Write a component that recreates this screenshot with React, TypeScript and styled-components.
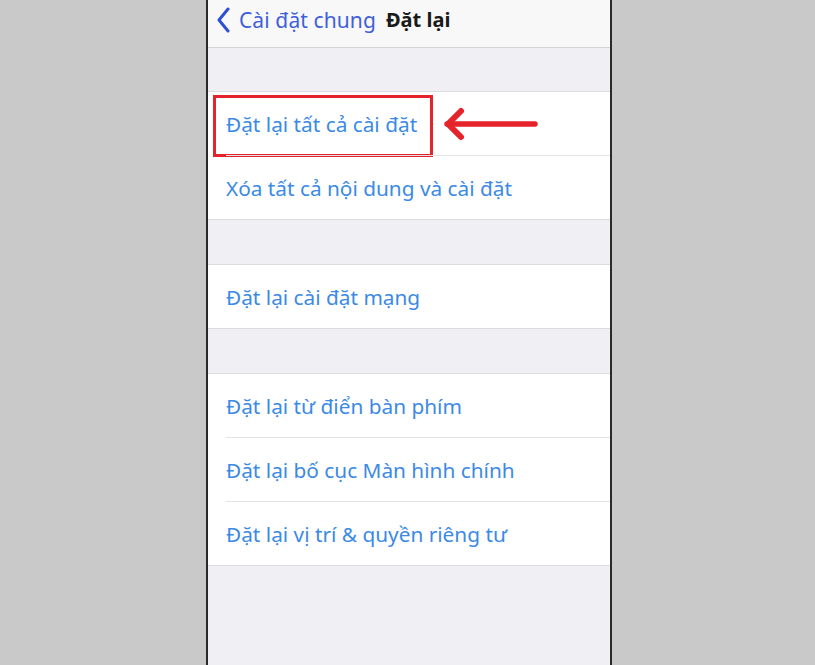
import styled, { createGlobalStyle } from 'styled-components';

const GlobalStyle = createGlobalStyle`
  html, body {
    margin: 0;
    padding: 0;
    background: #c9c9c9;
  }
  body {
    font-family: "Noto Sans", "Liberation Sans", sans-serif;
  }
`;

const Page = styled.div`
  width: 815px;
  height: 665px;
  display: flex;
  padding-left: 206px;
  box-sizing: border-box;
  background: #c9c9c9;
  overflow: hidden;
`;

const Phone = styled.div`
  width: 402px;
  height: 665px;
  border-left: 2px solid #2a2a2a;
  border-right: 2px solid #2a2a2a;
  background: #efeff4;
  display: flex;
  flex-direction: column;
`;

const NavBar = styled.div`
  height: 48px;
  box-sizing: border-box;
  flex-shrink: 0;
  background: #f8f8f8;
  border-bottom: 1px solid #d4d4d8;
  display: flex;
  align-items: center;
  padding: 0 0 8px 8px;
  gap: 10px;
`;

const BackLink = styled.div`
  display: flex;
  align-items: center;
  gap: 9px;
  color: #3f5fdc;
  font-size: 21px;
  letter-spacing: 0.1px;
`;

const NavTitle = styled.div`
  color: #1a1a1a;
  font-size: 20px;
  font-weight: 700;
`;

const Spacer = styled.div<{ $h: number }>`
  height: ${({ $h }) => $h}px;
  flex-shrink: 0;
`;

const Group = styled.div`
  background: #ffffff;
  border-top: 1px solid #dcdce0;
  border-bottom: 1px solid #dcdce0;
  flex-shrink: 0;
`;

const Row = styled.div<{ $first?: boolean }>`
  height: 63px;
  margin-left: 18px;
  display: flex;
  align-items: center;
  color: #3b8ae6;
  font-size: 20.8px;
  border-top: ${({ $first }) => ($first ? 'none' : '1px solid #e2e2e6')};
  position: relative;
`;

const Highlight = styled.div`
  position: absolute;
  left: -13px;
  top: 3px;
  width: 214px;
  height: 56px;
  border: 3px solid #e5232b;
`;

const Arrow = styled.svg`
  position: absolute;
  left: 217px;
  top: 14px;
`;

const rows = [
  ['Đặt lại tất cả cài đặt', 'Xóa tất cả nội dung và cài đặt'],
  ['Đặt lại cài đặt mạng'],
  ['Đặt lại từ điển bàn phím', 'Đặt lại bố cục Màn hình chính', 'Đặt lại vị trí & quyền riêng tư'],
];

export default function App() {
  return (
    <>
      <GlobalStyle />
      <Page>
        <Phone>
          <NavBar>
            <BackLink>
              <svg width="14" height="26" viewBox="0 0 14 26">
                <path d="M12 2 L3 13 L12 24" fill="none" stroke="#2f4fd6" strokeWidth="3" strokeLinecap="round" strokeLinejoin="round" />
              </svg>
              Cài đặt chung
            </BackLink>
            <NavTitle>Đặt lại</NavTitle>
          </NavBar>
          {rows.map((group, gi) => (
            <div key={gi}>
              <Spacer $h={gi === 0 ? 43 : 44} />
              <Group>
                {group.map((label, ri) => (
                  <Row key={label} $first={ri === 0}>
                    {label}
                    {gi === 0 && ri === 0 && (
                      <>
                        <Highlight />
                        <Arrow width="100" height="36" viewBox="0 0 100 36">
                          <path d="M4 18 H92" stroke="#e5232b" strokeWidth="5.5" strokeLinecap="round" />
                          <path d="M18 5 L5 18 L18 31" fill="none" stroke="#e5232b" strokeWidth="6" strokeLinecap="round" strokeLinejoin="round" />
                        </Arrow>
                      </>
                    )}
                  </Row>
                ))}
              </Group>
            </div>
          ))}
        </Phone>
      </Page>
    </>
  );
}
